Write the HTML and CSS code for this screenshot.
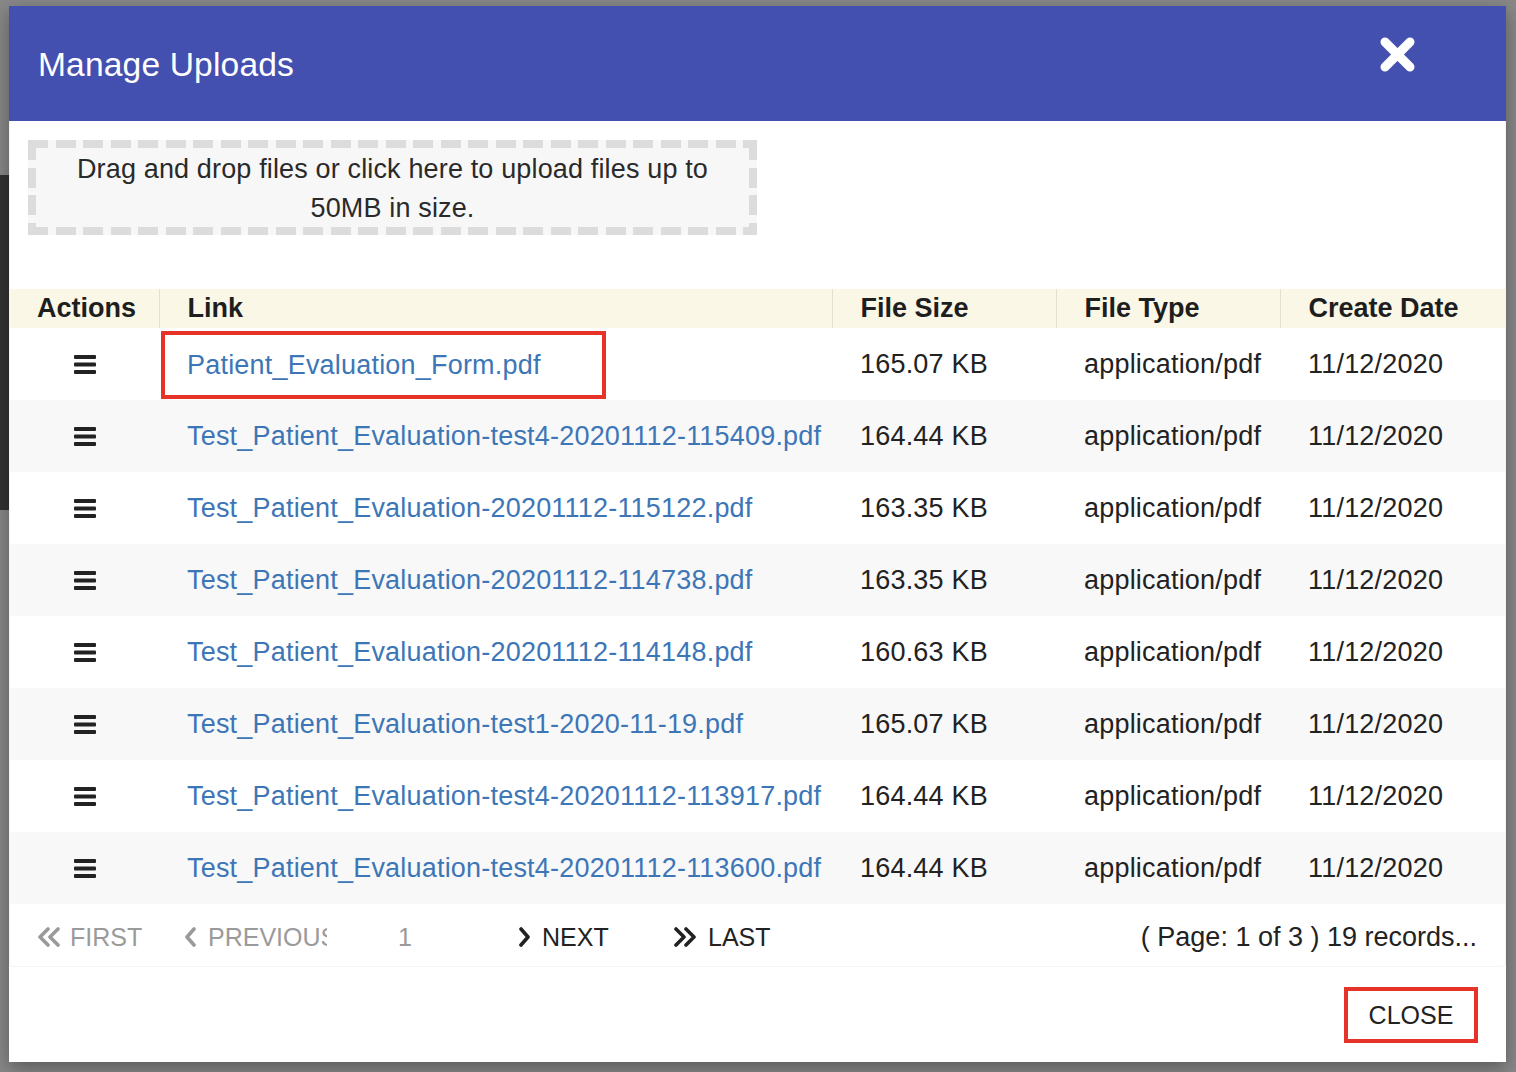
FILE: index.html
```html
<!DOCTYPE html>
<html lang="en">
<head>
<meta charset="utf-8">
<title>Manage Uploads</title>
<link rel="stylesheet" href="styles.css">
</head>
<body>
<div class="backdrop-block"></div>
<div class="modal">
  <div class="modal-header">
    <h1 class="modal-title">Manage Uploads</h1>
    <button class="header-close" aria-label="Close">
      <svg width="35" height="35" viewBox="0 0 35 35"><path d="M5 5 L30 30 M30 5 L5 30" stroke="#fff" stroke-width="9" stroke-linecap="round" fill="none"/></svg>
    </button>
  </div>
  <div class="modal-panel">
    <div class="dropzone">Drag and drop files or click here to upload files up to 50MB in size.</div>
    <table class="uploads">
      <colgroup>
        <col class="c-actions"><col class="c-link"><col class="c-size"><col class="c-type"><col>
      </colgroup>
      <thead>
        <tr><th>Actions</th><th>Link</th><th>File Size</th><th>File Type</th><th>Create Date</th></tr>
      </thead>
      <tbody>
        <tr>
          <td class="act"><svg class="bars" width="22" height="19" viewBox="0 0 22 19"><rect x="0" y="0" width="22" height="4" rx="1"/><rect x="0" y="7.5" width="22" height="4" rx="1"/><rect x="0" y="15" width="22" height="4" rx="1"/></svg></td>
          <td class="hl-cell"><span class="hl"><a href="#">Patient_Evaluation_Form.pdf</a></span></td>
          <td>165.07 KB</td><td>application/pdf</td><td>11/12/2020</td>
        </tr>
        <tr>
          <td class="act"><svg class="bars" width="22" height="19" viewBox="0 0 22 19"><rect x="0" y="0" width="22" height="4" rx="1"/><rect x="0" y="7.5" width="22" height="4" rx="1"/><rect x="0" y="15" width="22" height="4" rx="1"/></svg></td>
          <td><a href="#">Test_Patient_Evaluation-test4-20201112-115409.pdf</a></td>
          <td>164.44 KB</td><td>application/pdf</td><td>11/12/2020</td>
        </tr>
        <tr>
          <td class="act"><svg class="bars" width="22" height="19" viewBox="0 0 22 19"><rect x="0" y="0" width="22" height="4" rx="1"/><rect x="0" y="7.5" width="22" height="4" rx="1"/><rect x="0" y="15" width="22" height="4" rx="1"/></svg></td>
          <td><a href="#">Test_Patient_Evaluation-20201112-115122.pdf</a></td>
          <td>163.35 KB</td><td>application/pdf</td><td>11/12/2020</td>
        </tr>
        <tr>
          <td class="act"><svg class="bars" width="22" height="19" viewBox="0 0 22 19"><rect x="0" y="0" width="22" height="4" rx="1"/><rect x="0" y="7.5" width="22" height="4" rx="1"/><rect x="0" y="15" width="22" height="4" rx="1"/></svg></td>
          <td><a href="#">Test_Patient_Evaluation-20201112-114738.pdf</a></td>
          <td>163.35 KB</td><td>application/pdf</td><td>11/12/2020</td>
        </tr>
        <tr>
          <td class="act"><svg class="bars" width="22" height="19" viewBox="0 0 22 19"><rect x="0" y="0" width="22" height="4" rx="1"/><rect x="0" y="7.5" width="22" height="4" rx="1"/><rect x="0" y="15" width="22" height="4" rx="1"/></svg></td>
          <td><a href="#">Test_Patient_Evaluation-20201112-114148.pdf</a></td>
          <td>160.63 KB</td><td>application/pdf</td><td>11/12/2020</td>
        </tr>
        <tr>
          <td class="act"><svg class="bars" width="22" height="19" viewBox="0 0 22 19"><rect x="0" y="0" width="22" height="4" rx="1"/><rect x="0" y="7.5" width="22" height="4" rx="1"/><rect x="0" y="15" width="22" height="4" rx="1"/></svg></td>
          <td><a href="#">Test_Patient_Evaluation-test1-2020-11-19.pdf</a></td>
          <td>165.07 KB</td><td>application/pdf</td><td>11/12/2020</td>
        </tr>
        <tr>
          <td class="act"><svg class="bars" width="22" height="19" viewBox="0 0 22 19"><rect x="0" y="0" width="22" height="4" rx="1"/><rect x="0" y="7.5" width="22" height="4" rx="1"/><rect x="0" y="15" width="22" height="4" rx="1"/></svg></td>
          <td><a href="#">Test_Patient_Evaluation-test4-20201112-113917.pdf</a></td>
          <td>164.44 KB</td><td>application/pdf</td><td>11/12/2020</td>
        </tr>
        <tr>
          <td class="act"><svg class="bars" width="22" height="19" viewBox="0 0 22 19"><rect x="0" y="0" width="22" height="4" rx="1"/><rect x="0" y="7.5" width="22" height="4" rx="1"/><rect x="0" y="15" width="22" height="4" rx="1"/></svg></td>
          <td><a href="#">Test_Patient_Evaluation-test4-20201112-113600.pdf</a></td>
          <td>164.44 KB</td><td>application/pdf</td><td>11/12/2020</td>
        </tr>
      </tbody>
    </table>
    <div class="pager">
      <span class="pg pg-first disabled"><svg width="23" height="20" viewBox="0 0 23 20"><path d="M11 2 L3 10 L11 18 M21 2 L13 10 L21 18" stroke="currentColor" stroke-width="3.6" stroke-linecap="round" stroke-linejoin="round" fill="none"/></svg>FIRST</span>
      <span class="pg pg-prev disabled"><svg width="13" height="20" viewBox="0 0 13 20"><path d="M10 2 L3 10 L10 18" stroke="currentColor" stroke-width="3.6" stroke-linecap="round" stroke-linejoin="round" fill="none"/></svg><span class="clip-label">PREVIOUS</span></span>
      <span class="pg pg-num disabled">1</span>
      <span class="pg pg-next"><svg width="13" height="20" viewBox="0 0 13 20"><path d="M3 2 L10 10 L3 18" stroke="currentColor" stroke-width="3.6" stroke-linecap="round" stroke-linejoin="round" fill="none"/></svg>NEXT</span>
      <span class="pg pg-last"><svg width="23" height="20" viewBox="0 0 23 20"><path d="M2 2 L10 10 L2 18 M12 2 L20 10 L12 18" stroke="currentColor" stroke-width="3.6" stroke-linecap="round" stroke-linejoin="round" fill="none"/></svg>LAST</span>
      <span class="records">( Page: 1 of 3 ) 19 records...</span>
    </div>
  </div>
  <div class="modal-footer">
    <button class="close-btn">CLOSE</button>
  </div>
</div>
</body>
</html>
```

FILE: styles.css
```css
html, body {
  margin: 0;
  padding: 0;
}
body {
  width: 1516px;
  height: 1072px;
  overflow: hidden;
  background: #888888;
  font-family: "Liberation Sans", Arial, Helvetica, sans-serif;
  color: #222;
  position: relative;
}
.backdrop-block {
  position: absolute;
  left: -30px;
  top: 175px;
  width: 80px;
  height: 335px;
  background: #333333;
  border-radius: 14px;
}
.modal {
  position: relative;
  margin: 6px 0 0 9px;
  width: 1497px;
  height: 1056px;
  background: #fff;
  box-shadow: 0 6px 18px rgba(0, 0, 0, 0.35);
  display: flex;
  flex-direction: column;
}
.modal-header {
  height: 115px;
  flex: none;
  background: #4450b0;
  display: flex;
  align-items: center;
  justify-content: space-between;
  padding: 0 91px 0 29px;
}
.modal-title {
  margin: 3px 0 0 0;
  font-size: 33.6px;
  font-weight: normal;
  color: #fff;
  letter-spacing: 0.15px;
}
.header-close {
  align-self: flex-start;
  margin-top: 31px;
  padding: 0;
  border: 0;
  background: none;
  width: 35px;
  height: 35px;
  display: block;
}
.header-close svg { display: block; }

.modal-panel {
  height: 846px;
  box-sizing: border-box;
  border: 1px solid #f3f3f3;
  border-top: 0;
  border-radius: 0 0 5px 5px;
  padding-top: 19px;
  display: flex;
  flex-direction: column;
}
.dropzone {
  margin-left: 18px;
  width: 729px;
  height: 95px;
  box-sizing: border-box;
  padding: 10px 30px 7px;
  text-align: center;
  font-size: 27px;
  line-height: 39px;
  letter-spacing: 0.15px;
  color: #2a2a2a;
  background:
    repeating-linear-gradient(90deg, #dcdcdc 0 20px, transparent 20px 27.5px) left top / 100% 8px no-repeat,
    repeating-linear-gradient(90deg, #dcdcdc 0 20px, transparent 20px 27.5px) left bottom / 100% 8px no-repeat,
    repeating-linear-gradient(180deg, #dcdcdc 0 20px, transparent 20px 27.5px) left top / 8px 100% no-repeat,
    repeating-linear-gradient(180deg, #dcdcdc 0 20px, transparent 20px 27.5px) right top / 8px 100% no-repeat,
    #f7f7f7;
}
.uploads {
  margin-top: 54px;
  width: 1495px;
  table-layout: fixed;
  border-collapse: collapse;
  font-size: 27px;
}
.c-actions { width: 149px; }
.c-link { width: 673px; }
.c-size { width: 224px; }
.c-type { width: 224px; }

.uploads th {
  box-sizing: border-box;
  height: 39px;
  padding: 0 0 0 28px;
  text-align: left;
  font-weight: bold;
  background: #faf7e6;
  border-left: 1px solid #e4e0cd;
  color: #1e1e1e;
  white-space: nowrap;
  overflow: hidden;
}
.uploads th:first-child {
  border-left: 0;
  padding-left: 27px;
}
.uploads td {
  box-sizing: border-box;
  height: 72px;
  padding: 0 0 0 28px;
  vertical-align: middle;
  white-space: nowrap;
  color: #222;
  letter-spacing: 0.2px;
}
.uploads tbody tr:nth-child(even) td { background: #f8f8f8; }
.uploads td.act {
  padding: 0;
  text-align: center;
}
.bars {
  display: block;
  margin: 0 auto;
  fill: #222;
}
.uploads a {
  color: #3d76b7;
  text-decoration: none;
}
.uploads td.hl-cell {
  padding: 3px 0 1px 2px;
}
.hl {
  display: flex;
  align-items: center;
  box-sizing: border-box;
  width: 445px;
  height: 68px;
  border: 4px solid #e5332a;
  padding-left: 22px;
}

.pager {
  flex: 1;
  display: flex;
  align-items: center;
  padding: 4px 28px 0 27px;
  font-size: 25px;
  color: #222;
}
.pg {
  display: flex;
  align-items: center;
  white-space: nowrap;
  flex: none;
}
.pg svg { display: block; flex: none; }
.disabled { color: #9a9a9a; }
.pg-first { width: 147px; }
.pg-first svg { margin-right: 10px; }
.pg-prev { width: 143px; }
.pg-prev svg { margin-right: 11px; }
.clip-label {
  display: block;
  width: 119px;
  overflow: hidden;
}
.pg-num { width: 120px; padding-left: 71px; }
.pg-next { width: 156px; }
.pg-next svg { margin-right: 11px; }
.pg-last svg { margin-right: 11px; }
.records {
  margin-left: auto;
  font-size: 27px;
  color: #222;
}

.modal-footer {
  flex: 1;
  display: flex;
  justify-content: flex-end;
  align-items: flex-start;
  padding: 20px 28px 0 0;
}
.close-btn {
  width: 134px;
  height: 56px;
  box-sizing: border-box;
  border: 4px solid #e5332a;
  background: #fff;
  font-family: "Liberation Sans", Arial, Helvetica, sans-serif;
  font-size: 25px;
  color: #222;
  padding: 0;
}
```
